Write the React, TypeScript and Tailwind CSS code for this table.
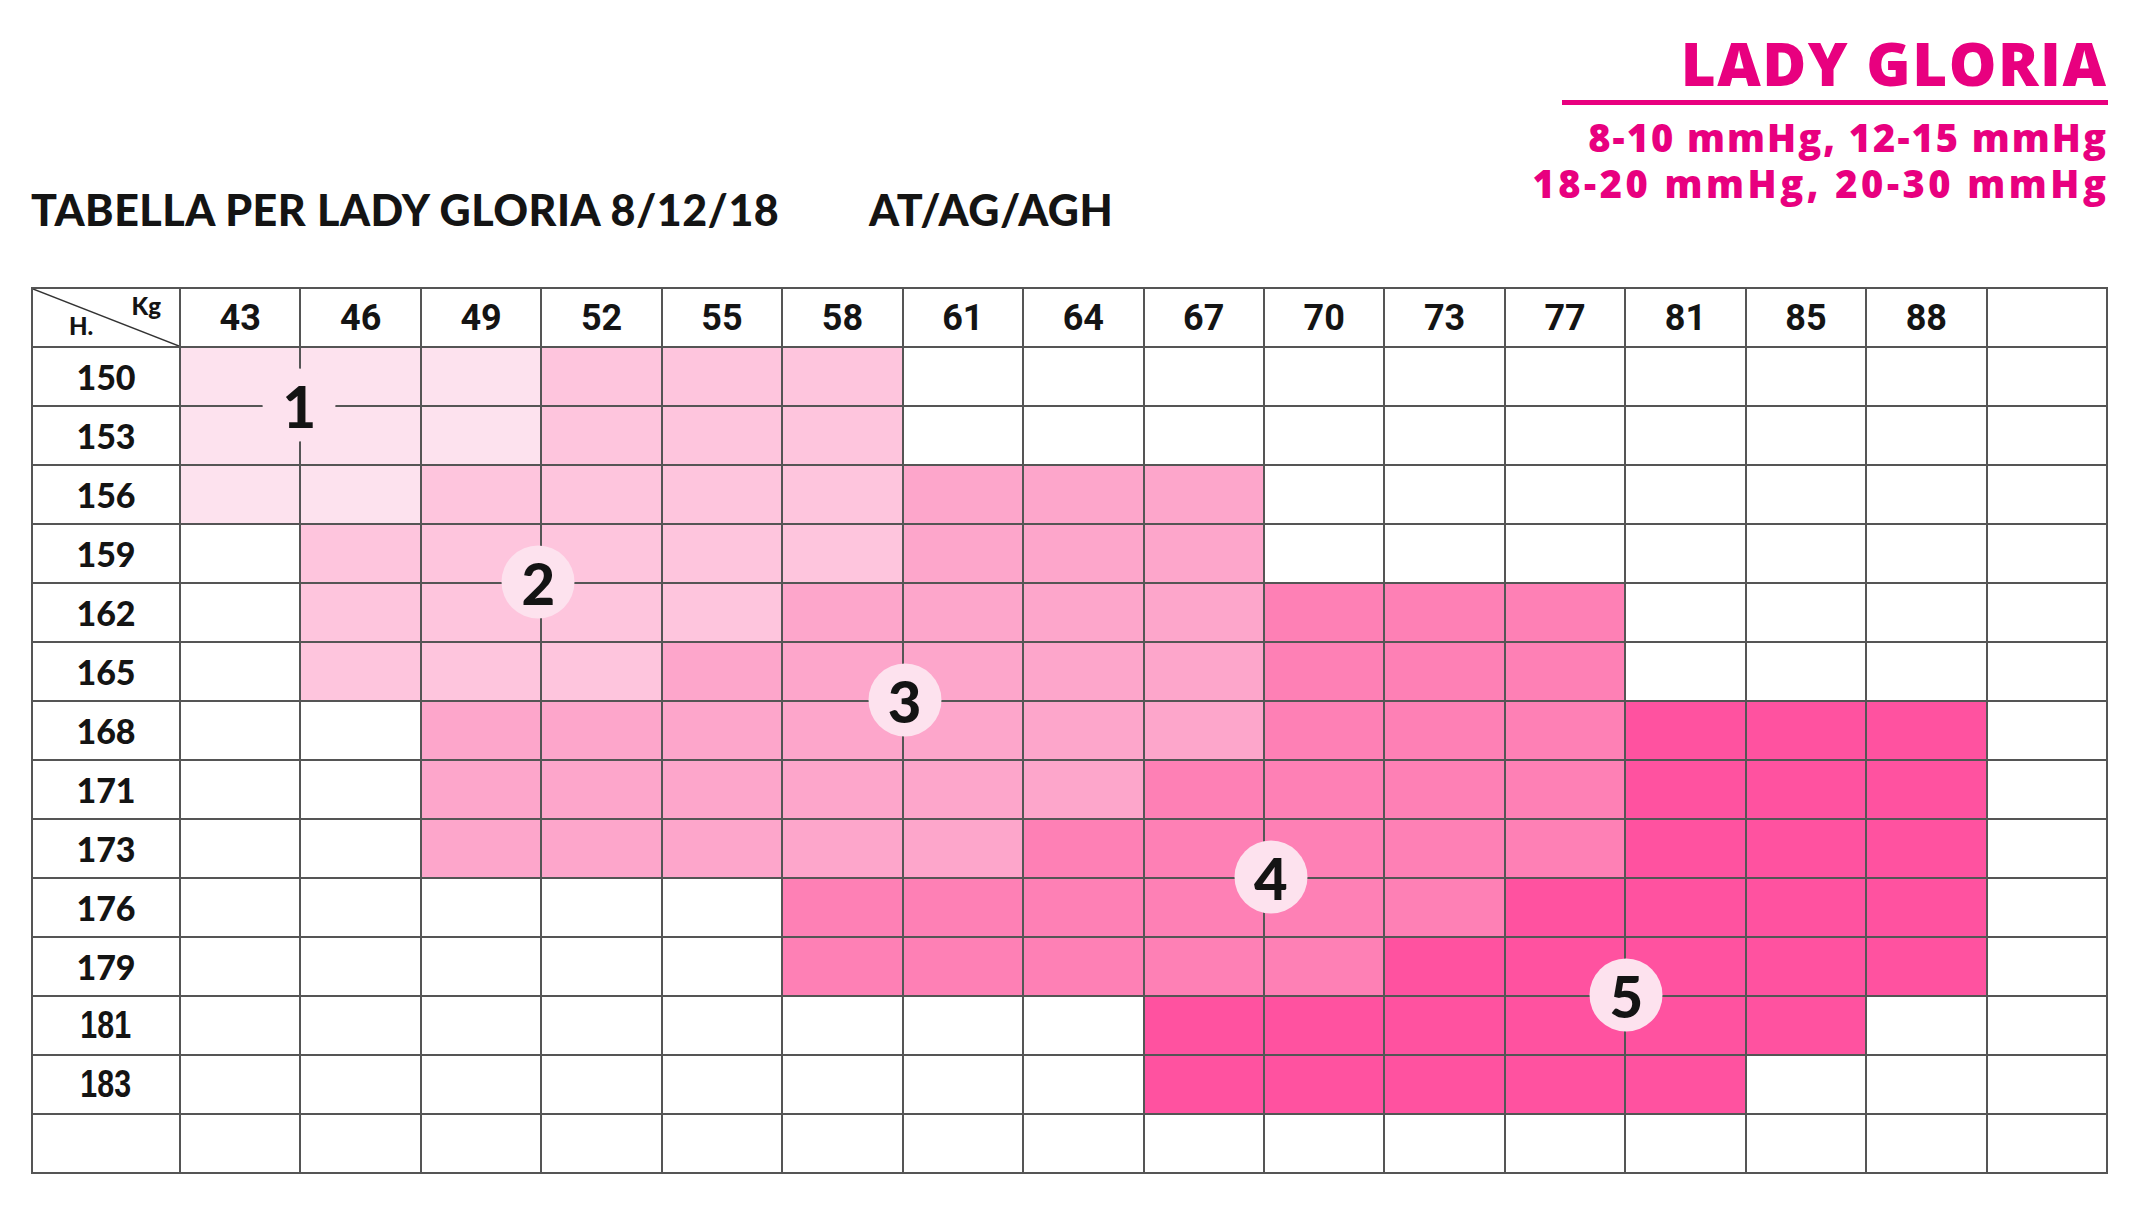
const kgs = ['43', '46', '49', '52', '55', '58', '61', '64', '67', '70', '73', '77', '81', '85', '88', ''];

// zone per cell: 0 = white, 1..5 = compression zones
const rows: { h: string; z: string; narrow?: boolean }[] = [
  { h: '150', z: '1112220000000000' },
  { h: '153', z: '1112220000000000' },
  { h: '156', z: '1122223330000000' },
  { h: '159', z: '0222223330000000' },
  { h: '162', z: '0222233334440000' },
  { h: '165', z: '0222333334440000' },
  { h: '168', z: '0033333334445550' },
  { h: '171', z: '0033333344445550' },
  { h: '173', z: '0033333444445550' },
  { h: '176', z: '0000044444455550' },
  { h: '179', z: '0000044444555550' },
  { h: '181', z: '0000000055555500', narrow: true },
  { h: '183', z: '0000000055555000', narrow: true },
  { h: '', z: '0000000000000000' },
];

const zoneBg = ['bg-white', 'bg-[#fde2ee]', 'bg-[#fec5dd]', 'bg-[#fda6cb]', 'bg-[#fe80b5]', 'bg-[#ff52a0]'];

// badge sits on the bottom-right corner of these cells (row label, column index)
const badges: Record<string, { col: number; n: string; pos: string }> = {
  '150': { col: 0, n: '1', pos: 'right-0' },
  '159': { col: 2, n: '2', pos: 'right-[2px]' },
  '165': { col: 5, n: '3', pos: 'right-[-3px]' },
  '173': { col: 8, n: '4', pos: 'right-[-8px]' },
  '179': { col: 11, n: '5', pos: 'right-[-2px]' },
};

const cell = 'h-[59px] border-r-2 border-b-2 border-[#555]';

function Badge({ n, pos }: { n: string; pos: string }) {
  return (
    <div
      className={`absolute ${pos} bottom-0 z-10 flex h-[73px] w-[73px] translate-x-1/2 translate-y-1/2 items-center justify-center rounded-full bg-[#fde2ee] text-[58px] leading-none font-black text-[#141414] [font-family:Lato,sans-serif]`}
    >
      {n}
    </div>
  );
}

export default function App() {
  return (
    <div className="h-[1220px] w-[2156px] bg-white pr-[48px] pl-[31px] [font-family:Lato,sans-serif]">
      <div className="flex h-[287px] justify-between">
        <div className="flex pt-[188px] text-[43px] leading-none font-black tracking-[0.5px] text-[#141414]">
          <span className="w-[838px]">TABELLA PER LADY GLORIA 8/12/18</span>
          <span>AT/AG/AGH</span>
        </div>
        <div className="flex flex-col items-end pt-[33px] pr-[2px] font-extrabold text-[#e8007f] [font-family:'Open_Sans',sans-serif]">
          <div className="-mr-[1.5px] text-[60px] leading-none tracking-[1.5px]">LADY GLORIA</div>
          <div className="mt-[7px] -mr-[2px] h-[5px] w-[546px] bg-[#e8007f]" />
          <div className="mt-[9px] -mr-[2px] text-[38px] leading-[46px] tracking-[2px]">8-10 mmHg, 12-15 mmHg</div>
          <div className="-mr-[3.5px] text-[38px] leading-[46px] tracking-[3.5px]">18-20 mmHg, 20-30 mmHg</div>
        </div>
      </div>

      <div className="grid w-[2077px] grid-cols-[148px_repeat(16,minmax(0,1fr))] border-t-2 border-l-2 border-[#555]">
        <div className={`${cell} relative`}>
          <svg className="absolute inset-0 h-full w-full" preserveAspectRatio="none" viewBox="0 0 100 100">
            <line x1="0" y1="0" x2="100" y2="100" stroke="#333" strokeWidth="1.5" vectorEffect="non-scaling-stroke" />
          </svg>
          <span className="absolute top-[5px] right-[18px] text-[24px] leading-none font-black text-[#141414]">Kg</span>
          <span className="absolute bottom-[8px] left-[36px] text-[24px] leading-none font-black text-[#141414]">H.</span>
        </div>
        {kgs.map((k, i) => (
          <div
            key={i}
            className={`${cell} flex items-center justify-center text-[36px] font-bold text-[#141414] [font-family:Roboto,sans-serif]`}
          >
            {k}
          </div>
        ))}

        {rows.map((r, ri) => (
          <div key={ri} className="contents">
            <div className={`${cell} flex items-center justify-center text-[34px] font-black text-[#141414]`}>
              {r.narrow ? (
                <span className="inline-block scale-x-[0.8] text-[38px] font-bold [font-family:'Liberation_Sans',sans-serif]">{r.h}</span>
              ) : (
                r.h
              )}
            </div>
            {r.z.split('').map((z, ci) => {
              const b = badges[r.h];
              const hasBadge = b && b.col === ci;
              return (
                <div key={ci} className={`${cell} ${zoneBg[Number(z)]} ${hasBadge ? 'relative' : ''}`}>
                  {hasBadge && <Badge n={b.n} pos={b.pos} />}
                </div>
              );
            })}
          </div>
        ))}
      </div>
    </div>
  );
}
